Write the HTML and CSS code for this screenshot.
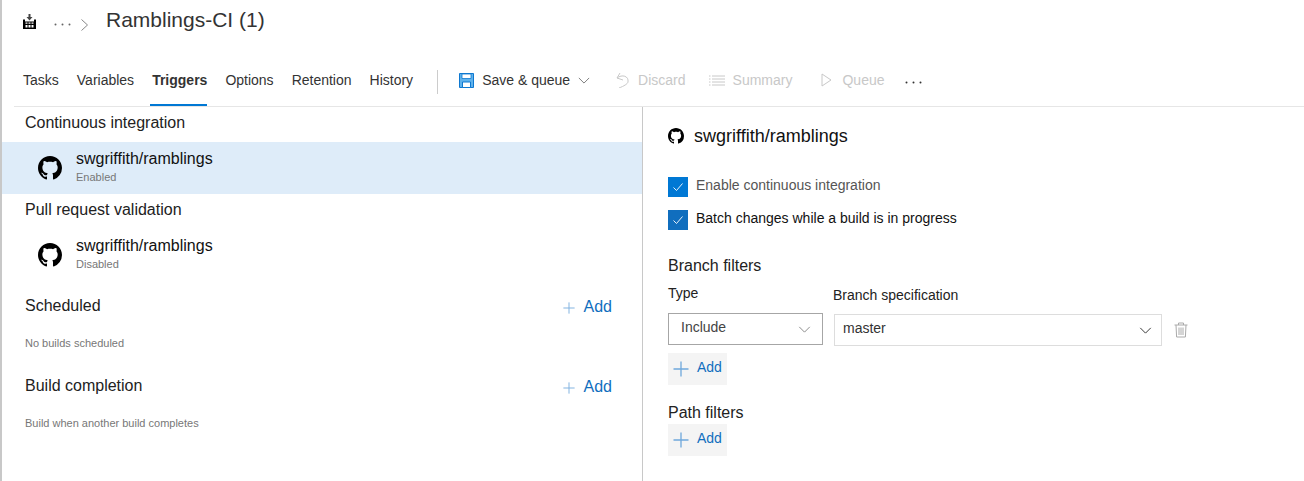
FILE: index.html
```html
<!DOCTYPE html>
<html lang="en">
<head>
<meta charset="utf-8">
<title>Ramblings-CI (1)</title>
<link rel="stylesheet" href="styles.css">
</head>
<body>
<svg class="defs" width="0" height="0" aria-hidden="true">
  <symbol id="gh" viewBox="0 0 16 16">
    <path fill-rule="evenodd" d="M8 0C3.58 0 0 3.58 0 8c0 3.54 2.29 6.53 5.47 7.59.4.07.55-.17.55-.38 0-.19-.01-.82-.01-1.49-2.01.37-2.53-.49-2.69-.94-.09-.23-.48-.94-.82-1.13-.28-.15-.68-.52-.01-.53.63-.01 1.08.58 1.23.82.72 1.21 1.87.87 2.33.66.07-.52.28-.87.51-1.07-1.78-.2-3.64-.89-3.64-3.95 0-.87.31-1.59.82-2.15-.08-.2-.36-1.02.08-2.12 0 0 .67-.21 2.2.82.64-.18 1.32-.27 2-.27s1.36.09 2 .27c1.53-1.04 2.2-.82 2.2-.82.44 1.1.16 1.92.08 2.12.51.56.82 1.27.82 2.15 0 3.07-1.87 3.75-3.65 3.95.29.25.54.73.54 1.48 0 1.07-.01 1.93-.01 2.2 0 .21.15.46.55.38A8.01 8.01 0 0 0 16 8c0-4.42-3.58-8-8-8z"/>
  </symbol>
  <symbol id="plus" viewBox="0 0 16 16">
    <path d="M8 0.5v15M0.5 8h15" fill="none" stroke="currentColor" stroke-width="1.3"/>
  </symbol>
  <symbol id="chev" viewBox="0 0 14 8">
    <path d="M1 1l6 6 6-6" fill="none" stroke="currentColor" stroke-width="1.1"/>
  </symbol>
  <symbol id="check" viewBox="0 0 12 10">
    <path d="M1.5 5.5l3 3 6-7" fill="none" stroke="#fff" stroke-width="0.9"/>
  </symbol>
  <symbol id="dots3" viewBox="0 0 17 3">
    <circle cx="1.5" cy="1.5" r="1" fill="currentColor"/>
    <circle cx="8.5" cy="1.5" r="1" fill="currentColor"/>
    <circle cx="15.5" cy="1.5" r="1" fill="currentColor"/>
  </symbol>
</svg>
<div class="app">
  <header class="crumbs">
    <svg class="build-icon" viewBox="0 0 13 15" width="13" height="15">
      <path d="M5.5 0h2v3H9.5L6.5 6.5 3.5 3h2z" fill="#444"/>
      <path fill-rule="evenodd" d="M0 5.5h2v2h9v-2h2V15H0zM2.5 8.5v1.2h2V8.5zM5.5 8.5v1.2h2V8.5zM8.5 8.5v1.2h2V8.5zM2.5 11v2.5h2V11zM5.5 11v2.5h2V11zM8.5 11v2.5h2V11z" fill="#000"/>
    </svg>
    <svg class="dots" width="17" height="3"><use href="#dots3"/></svg>
    <svg class="crumb-sep" viewBox="0 0 7 12" width="7" height="12"><path d="M0.5 0.5l6 5.5-6 5.5" fill="none" stroke="#888" stroke-width="1"/></svg>
    <h1 class="title">Ramblings-CI (1)</h1>
  </header>

  <nav class="toolbar">
    <div class="tabs">
      <a class="tab">Tasks</a>
      <a class="tab">Variables</a>
      <a class="tab active">Triggers</a>
      <a class="tab">Options</a>
      <a class="tab">Retention</a>
      <a class="tab">History</a>
    </div>
    <span class="divider"></span>
    <span class="cmd save">
      <svg viewBox="0 0 15 15" width="15" height="15">
        <path d="M0.5 0.5h14v14h-14z" fill="#5fb2ec" stroke="#0e78d0"/>
        <path d="M3 1h9v4.5H3z" fill="#fff" stroke="#0e78d0" stroke-width="0.8"/>
        <path d="M3.5 9h8v5.5h-8z" fill="#fff" stroke="#0e78d0"/>
      </svg>
      Save &amp; queue
      <svg class="cmd-chev" width="12" height="7"><use href="#chev"/></svg>
    </span>
    <span class="cmd off discard">
      <svg viewBox="0 0 13 16" width="13" height="16"><path d="M4 1L1 6l6 2M1 6C6 2 13 4 12 10 11.5 12 8 14 3 16" fill="none" stroke="#c8c8c8" stroke-width="1"/></svg>
      Discard
    </span>
    <span class="cmd off summary">
      <svg viewBox="0 0 16 11" width="16" height="11"><path d="M0 1h1.5M3 1h13M0 4h1.5M3 4h13M0 7h1.5M3 7h13M0 10h1.5M3 10h13" fill="none" stroke="#c8c8c8" stroke-width="1"/></svg>
      Summary
    </span>
    <span class="cmd off queue">
      <svg viewBox="0 0 11 14" width="11" height="14"><path d="M1 1l9 6-9 6z" fill="none" stroke="#c8c8c8" stroke-width="1"/></svg>
      Queue
    </span>
    <svg class="more" width="17" height="3"><use href="#dots3"/></svg>
  </nav>

  <main class="content">
    <section class="left">
      <h2 class="group">Continuous integration</h2>
      <div class="repo selected">
        <svg class="repo-icon" width="24" height="24"><use href="#gh"/></svg>
        <div>
          <div class="repo-name">swgriffith/ramblings</div>
          <div class="repo-state">Enabled</div>
        </div>
      </div>
      <h2 class="group">Pull request validation</h2>
      <div class="repo">
        <svg class="repo-icon" width="24" height="24"><use href="#gh"/></svg>
        <div>
          <div class="repo-name">swgriffith/ramblings</div>
          <div class="repo-state">Disabled</div>
        </div>
      </div>
      <div class="addrow scheduled">
        <h2 class="group">Scheduled</h2>
        <span class="add-link"><svg width="12" height="12"><use href="#plus"/></svg>Add</span>
      </div>
      <p class="note">No builds scheduled</p>
      <div class="addrow completion">
        <h2 class="group">Build completion</h2>
        <span class="add-link"><svg width="12" height="12"><use href="#plus"/></svg>Add</span>
      </div>
      <p class="note">Build when another build completes</p>
    </section>

    <section class="right">
      <div class="detail-head">
        <svg width="16" height="16"><use href="#gh"/></svg>
        <span>swgriffith/ramblings</span>
      </div>
      <label class="check first-check"><span class="box"><svg width="12" height="10"><use href="#check"/></svg></span><span class="check-text muted">Enable continuous integration</span></label>
      <label class="check second-check"><span class="box dark"><svg width="12" height="10"><use href="#check"/></svg></span><span class="check-text">Batch changes while a build is in progress</span></label>

      <h3 class="filters-title branch">Branch filters</h3>
      <div class="labels">
        <span class="type-label">Type</span>
        <span class="spec-label">Branch specification</span>
      </div>
      <div class="fields">
        <div class="select"><span>Include</span><svg width="13" height="7"><use href="#chev"/></svg></div>
        <div class="input"><span>master</span><svg width="13" height="7"><use href="#chev"/></svg></div>
        <svg class="trash" viewBox="0 0 14 16" width="14" height="16">
          <path d="M0.5 3h13M4.5 3V1h5v2M2 3l.6 12h8.8L12 3M5 5.5v7.5M7 5.5v7.5M9 5.5v7.5" fill="none" stroke="#aaa" stroke-width="1"/>
        </svg>
      </div>
      <button class="add-btn"><svg width="16" height="16"><use href="#plus"/></svg><span>Add</span></button>
      <h3 class="filters-title path">Path filters</h3>
      <button class="add-btn path-add"><svg width="16" height="16"><use href="#plus"/></svg><span>Add</span></button>
    </section>
  </main>
</div>
</body>
</html>
```

FILE: styles.css
```css
* { box-sizing: border-box; }
html, body { margin: 0; height: 100%; overflow: hidden; background: #fff; }
body { font-family: "Liberation Sans", Arial, sans-serif; color: #111; }
.defs { position: absolute; }
.app { height: 481px; border-left: 2px solid #c8c8c8; display: flex; flex-direction: column; }

.crumbs { height: 46px; display: flex; align-items: flex-start; padding-left: 21px; flex: none; }
.build-icon { margin-top: 14px; flex: none; }
.dots { margin: 23px 0 0 18px; color: #666; flex: none; }
.crumb-sep { margin: 19px 0 0 10px; flex: none; }
.title { margin: 6px 0 0 18px; font-size: 21px; line-height: 28px; font-weight: 400; color: #333; }

.toolbar { height: 61px; margin-left: 12px; border-bottom: 1px solid #e6e6e6; display: flex; align-items: stretch; flex: none; font-size: 14px; color: #333; }
.tabs { display: flex; gap: 18px; padding-left: 9px; }
.tab { line-height: 68px; height: 60px; position: relative; }
.tab.active { font-weight: 700; }
.tab.active::after { content: ""; position: absolute; left: -2px; right: 0; bottom: 0; height: 2px; background: #0078d4; }
.divider { width: 1px; height: 24px; background: #ccc; margin: 24px 21px 0 24px; }
.cmd { display: flex; align-items: center; gap: 8px; height: 68px; }
.cmd.off { color: #c8c8c8; }
.cmd-chev { color: #777; }
.discard { margin-left: 26px; gap: 9px; }
.summary { margin-left: 23px; }
.queue { margin-left: 29px; gap: 10px; }
.more { margin: 35px 0 0 20px; color: #333; flex: none; }

.content { flex: 1; display: flex; min-height: 0; }
.left { width: 641px; border-right: 1px solid #c8c8c8; flex: none; }
.group { margin: 0; font-size: 16px; font-weight: 400; line-height: 20px; color: #222; padding-left: 23px; padding-top: 6px; height: 35px; }
.repo { height: 52px; display: flex; align-items: center; padding-left: 36px; gap: 14px; }
.repo.selected { background: #deecf9; }
.repo-name { font-size: 16px; line-height: 20px; color: #111; margin-top: -3px; }
.repo-state { font-size: 11px; line-height: 13px; color: #777; margin-top: 2px; }
.addrow { display: flex; justify-content: space-between; align-items: flex-start; padding-right: 30px; }
.addrow .group { padding-top: 1px; height: 21px; }
.scheduled { margin-top: 14px; }
.completion { margin-top: 25px; }
.add-link { display: flex; align-items: center; gap: 9px; font-size: 16px; line-height: 20px; color: #106ebe; margin-top: 2px; }
.add-link svg { color: #7fb2e0; margin-top: 2px; }
.note { margin: 20px 0 0 23px; font-size: 11px; line-height: 13px; color: #777; }

.right { flex: 1; padding-left: 25px; }
.detail-head { display: flex; align-items: center; gap: 10px; font-size: 18px; line-height: 24px; margin-top: 17px; }
.check { display: flex; align-items: flex-start; gap: 8px; font-size: 14px; line-height: 18px; }
.check-text { margin-top: -1px; }
.first-check { margin-top: 29px; }
.second-check { margin-top: 13px; }
.box { width: 20px; height: 20px; background: #0078d4; display: flex; align-items: center; justify-content: center; flex: none; }
.box.dark { background: #106ebe; }
.muted { color: #555; }
.filters-title { margin: 0; font-size: 16px; line-height: 20px; font-weight: 400; color: #222; }
.branch { margin-top: 26px; }
.labels { display: flex; font-size: 14px; line-height: 18px; color: #222; }
.type-label { width: 165px; margin-top: 8px; }
.spec-label { margin-top: 10px; }
.fields { display: flex; align-items: flex-start; margin-top: 9px; font-size: 14px; }
.select { width: 155px; height: 32px; border: 1px solid #a6a6a6; display: flex; align-items: center; justify-content: space-between; padding: 0 11px 0 12px; color: #444; }
.select span { margin-top: -5px; }
.select svg { color: #888; }
.input { width: 328px; height: 32px; margin: 1px 0 0 11px; border: 1px solid #ddd; display: flex; align-items: center; justify-content: space-between; padding: 0 9px 0 8px; color: #333; }
.input span { margin-top: -4px; }
.input svg { color: #333; }
.trash { margin: 9px 0 0 12px; }
.add-btn { display: flex; align-items: flex-start; width: 59px; height: 32px; margin-top: 7px; padding: 0 0 0 5px; border: 0; background: #f4f4f4; font: 14px/18px "Liberation Sans", Arial, sans-serif; color: #106ebe; }
.add-btn svg { color: #6fa8dc; margin-top: 8px; }
.add-btn span { margin: 5px 0 0 8px; }
.path { margin-top: 18px; }
.path-add { margin-top: 1px; }
```
